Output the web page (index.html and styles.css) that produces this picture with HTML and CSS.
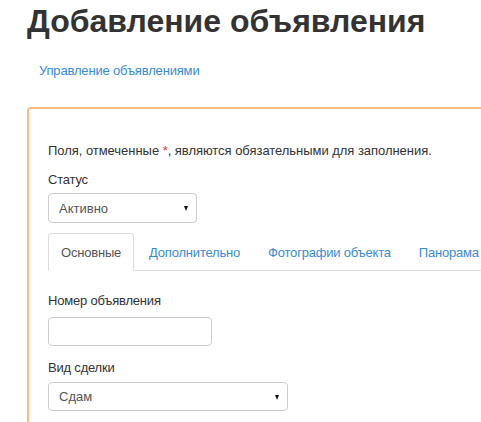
FILE: index.html
```html
<!DOCTYPE html>
<html lang="ru">
<head>
<meta charset="utf-8">
<link rel="stylesheet" href="styles.css">
</head>
<body>
<h1 class="title">Добавление объявления</h1>
<div class="crumbs"><a href="#" class="link">Управление объявлениями</a></div>
<div class="panel">
  <p class="note">Поля, отмеченные <span class="req">*</span>, являются обязательными для заполнения.</p>
  <div class="field field-status">
    <label class="label">Статус</label>
    <div class="select select-status"><span class="select-text">Активно</span><span class="caret"></span></div>
  </div>
  <ul class="tabs">
    <li class="tab active">Основные</li>
    <li class="tab">Дополнительно</li>
    <li class="tab">Фотографии объекта</li>
    <li class="tab">Панорама</li>
  </ul>
  <div class="field field-num">
    <label class="label">Номер объявления</label>
    <div class="input"></div>
  </div>
  <div class="field field-deal">
    <label class="label">Вид сделки</label>
    <div class="select select-deal"><span class="select-text">Сдам</span><span class="caret"></span></div>
  </div>
</div>
</body>
</html>
```
FILE: styles.css
```css
html, body {
  margin: 0;
  padding: 0;
  background: #fff;
  overflow: hidden;
}
body {
  font-family: "Liberation Sans", Arial, sans-serif;
  font-size: 13px;
  line-height: 15px;
  color: #333;
  width: 481px;
  height: 422px;
}
.title {
  margin: 0;
  padding: 3px 0 0 27px;
  font-size: 32px;
  line-height: 37px;
  font-weight: bold;
  color: #333;
  white-space: nowrap;
}
.crumbs {
  padding: 23px 0 0 39px;
}
.link {
  color: #3a8bd2;
  text-decoration: none;
  letter-spacing: -0.17px;
}
.panel {
  margin: 29px 0 0 27px;
  width: 520px;
  height: 400px;
  border: 2px solid #ffbb80;
  border-radius: 4px;
  padding: 34px 0 0 19px;
}
.note {
  margin: 0;
  white-space: nowrap;
  letter-spacing: -0.04px;
}
.req { color: #e0352f; }
.field {
  display: flex;
  flex-direction: column;
  align-items: flex-start;
}
.label {
  letter-spacing: -0.2px;
}
.field-status { margin-top: 14px; }
.field-status .select { margin-top: 6px; }
.select {
  box-sizing: border-box;
  height: 30px;
  border: 1px solid #ccc;
  border-radius: 4px;
  display: flex;
  align-items: center;
  justify-content: space-between;
  padding: 0 8px 0 10px;
  color: #555;
}
.select-status { width: 149px; }
.select-deal { width: 240px; height: 29px; }
.caret {
  width: 0;
  height: 0;
  border-left: 2.5px solid transparent;
  border-right: 2.5px solid transparent;
  border-top: 5px solid #111;
  margin-top: 1px;
}
.tabs {
  list-style: none;
  margin: 10px 0 0 0;
  padding: 0;
  display: flex;
  border-bottom: 1px solid #ddd;
  height: 37px;
}
.tab {
  box-sizing: border-box;
  height: 38px;
  padding: 11px 12px 0;
  margin-right: 2px;
  border: 1px solid transparent;
  border-radius: 4px 4px 0 0;
  color: #3a8bd2;
  white-space: nowrap;
  letter-spacing: -0.2px;
}
.tab.active {
  color: #555;
  background: #fff;
  border-color: #ddd;
  border-bottom-color: #fff;
}
.field-num { margin-top: 22px; }
.input {
  margin-top: 9px;
  box-sizing: border-box;
  width: 164px;
  height: 29px;
  border: 1px solid #ccc;
  border-radius: 4px;
}
.field-deal { margin-top: 14px; }
.field-deal .select { margin-top: 7px; }
```
